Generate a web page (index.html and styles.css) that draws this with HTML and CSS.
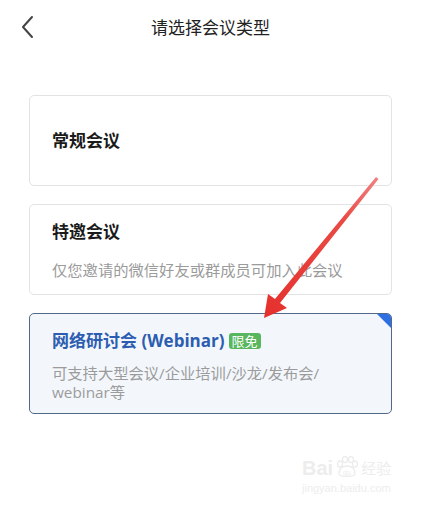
FILE: index.html
```html
<!DOCTYPE html>
<html lang="zh-CN">
<head>
<meta charset="utf-8">
<title>请选择会议类型</title>
<link rel="stylesheet" href="styles.css">
</head>
<body>
<div class="page">
  <header class="topbar">
    <button class="back" aria-label="返回">
      <svg width="14" height="24" viewBox="0 0 14 24"><polyline points="11,2 2,12 11,22" fill="none" stroke="#444" stroke-width="2" stroke-linecap="round" stroke-linejoin="round"/></svg>
    </button>
    <h1 class="title">请选择会议类型</h1>
    <span class="spacer"></span>
  </header>

  <main class="list">
    <div class="card card-plain">
      <div class="card-title">常规会议</div>
    </div>
    <div class="card card-invite">
      <div class="card-title">特邀会议</div>
      <div class="card-desc">仅您邀请的微信好友或群成员可加入此会议</div>
    </div>
    <div class="card card-webinar">
      <span class="corner"></span>
      <div class="card-title blue">网络研讨会 (Webinar)<span class="badge">限免</span></div>
      <div class="card-desc tight">可支持大型会议/企业培训/沙龙/发布会/<br>webinar等</div>
    </div>
  </main>

  <svg class="arrow" width="421" height="505" viewBox="0 0 421 505">
    <defs>
      <linearGradient id="ag" x1="377" y1="178" x2="264" y2="318" gradientUnits="userSpaceOnUse">
        <stop offset="0" stop-color="#f08080"/>
        <stop offset="0.3" stop-color="#ea4a45"/>
        <stop offset="1" stop-color="#e5302c"/>
      </linearGradient>
    </defs>
    <polygon points="376,177 378.5,179 280,303 287,308 264,318 268,294 275,299" fill="url(#ag)"/>
  </svg>

  <div class="watermark">
    <div class="wm-top"><span class="wm-bai">Bai</span><svg class="wm-paw" width="26" height="22" viewBox="0 0 26 22"><g fill="none" stroke="#ececec" stroke-width="1.3"><ellipse cx="6" cy="8" rx="2.5" ry="3"/><ellipse cx="11" cy="3.5" rx="2.5" ry="3"/><ellipse cx="17" cy="3.5" rx="2.5" ry="3"/><ellipse cx="21" cy="8" rx="2.5" ry="3"/><path d="M5 18 C5 12 9 10 13 10 C17 10 21 12 21 18 C21 21 5 21 5 18 Z"/></g><text x="13" y="19" font-size="7" text-anchor="middle" fill="#ececec" font-family="Liberation Sans, sans-serif">du</text></svg><span class="wm-cn">经验</span></div>
    <div class="wm-url">jingyan.baidu.com</div>
  </div>
</div>
</body>
</html>
```

FILE: styles.css
```css
* { box-sizing: border-box; }
html, body { margin: 0; padding: 0; background: #ffffff; }
body {
  font-family: "Open Sans", "Noto Sans CJK SC", "Noto Sans", sans-serif;
  color: #1a1a1a;
}
.page {
  position: relative;
  width: 421px;
  height: 505px;
  overflow: hidden;
}
.topbar {
  height: 56px;
  display: grid;
  grid-template-columns: 56px 1fr 56px;
  align-items: center;
}
.back {
  border: 0;
  background: none;
  padding: 0;
  margin: 0;
  width: 56px;
  height: 56px;
  display: flex;
  align-items: center;
  justify-content: center;
  margin-top: -2px;
}
.title {
  margin: 0;
  text-align: center;
  font-size: 17px;
  font-weight: 400;
  color: #222;
  line-height: 20px;
}
.list {
  margin-top: 39px;
  padding: 0 29px;
  display: flex;
  flex-direction: column;
  gap: 18px;
}
.card {
  position: relative;
  border: 1px solid #e3e3e3;
  border-radius: 5px;
  padding: 17px 22px 14px;
  overflow: hidden;
}
.card-plain {
  height: 91px;
  display: flex;
  align-items: center;
  padding-top: 0;
  padding-bottom: 0;
}
.card-invite { height: 91px; }
.card-webinar {
  height: 101px;
  border-color: #52698a;
  background: #f3f7fb;
  padding-bottom: 11px;
}
.card-title {
  font-size: 17px;
  font-weight: 700;
  line-height: 20px;
  display: flex;
  align-items: center;
}
.card-title.blue { color: #2d5db1; }
.card-desc {
  margin-top: 18px;
  font-size: 15.3px;
  line-height: 20px;
  color: #9b9b9b;
}
.card-desc.tight {
  margin-top: 13px;
  line-height: 19px;
}
.badge {
  margin-left: 4px;
  background: #58b65e;
  color: #ffffff;
  font-size: 13px;
  font-weight: 400;
  line-height: 16px;
  height: 16px;
  padding: 0 3px;
  border-radius: 3px;
}
.corner {
  position: absolute;
  top: 0;
  right: 0;
  width: 0;
  height: 0;
  border-top: 14px solid #2f6fe0;
  border-left: 14px solid transparent;
}
.arrow {
  position: absolute;
  left: 0;
  top: 0;
  pointer-events: none;
}
.watermark {
  position: absolute;
  left: 302px;
  top: 452px;
  color: #ededed;
  font-family: "Liberation Sans", "Noto Sans CJK SC", sans-serif;
}
.wm-top {
  display: flex;
  align-items: flex-end;
  height: 28px;
}
.wm-bai { font-size: 20px; font-weight: 700; line-height: 24px; }
.wm-paw { margin: 0 1px 2px; }
.wm-cn { font-size: 15px; line-height: 22px; }
.wm-url { font-size: 11px; line-height: 14px; margin-top: 1px; }
```
